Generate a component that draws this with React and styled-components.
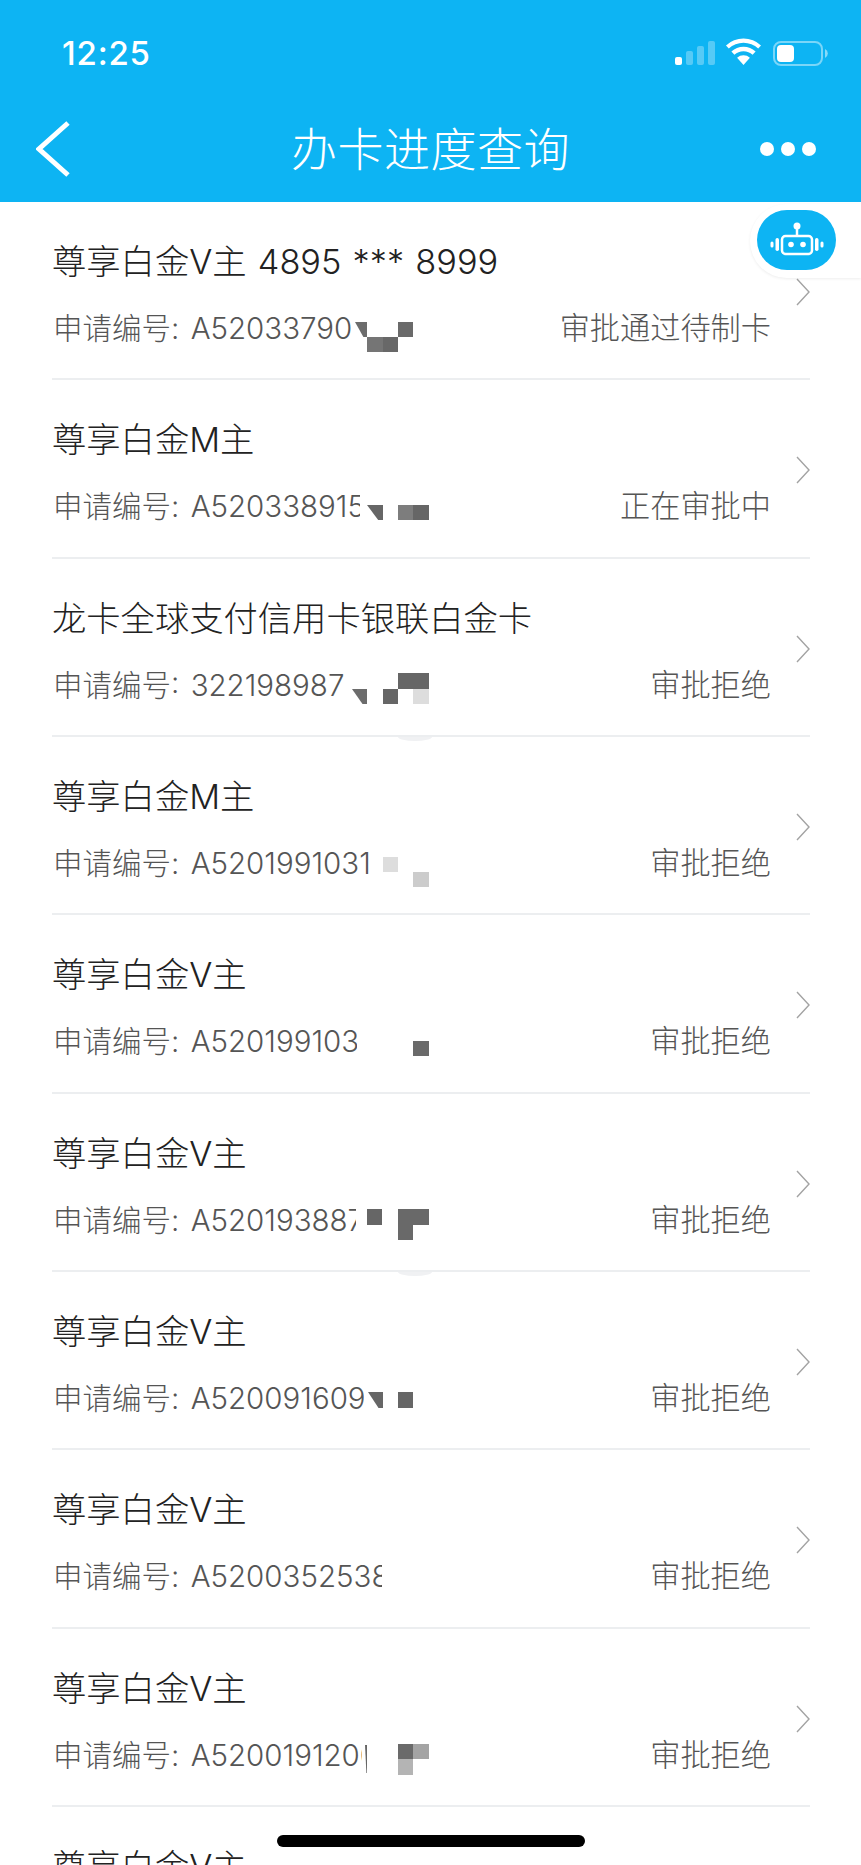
import styled, { createGlobalStyle } from "styled-components";

const GlobalStyle = createGlobalStyle`
  html, body {
    margin: 0;
    background: #fff;
  }
  body {
    font-family: Inter, "Noto Sans CJK SC", sans-serif;
  }
`;

const Page = styled.div`
  position: relative;
  width: 861px;
  height: 1865px;
  overflow: hidden;
  background: #fff;
`;

const Header = styled.header`
  height: 202px;
  background: #0db4f3;
  color: #fff;
`;

const StatusBar = styled.div`
  height: 106px;
  display: flex;
  align-items: center;
  justify-content: space-between;
  padding: 0 33px 0 62px;
  box-sizing: border-box;
`;

const Time = styled.span`
  font-size: 33px;
  font-weight: 500;
  letter-spacing: 0.8px;
  line-height: 1;
`;

const NavBar = styled.div`
  height: 96px;
  display: grid;
  grid-template-columns: 1fr auto 1fr;
  align-items: center;
  padding: 0 45px 10px 36px;
  box-sizing: border-box;
`;

const NavTitle = styled.h1`
  margin: 0;
  padding-left: 9px;
  font-size: 46px;
  font-weight: 300;
  letter-spacing: 0.5px;
  line-height: 1;
`;

const NavEnd = styled.div`
  display: flex;
  justify-content: flex-end;
`;

const Row = styled.div`
  position: relative;
  height: 178.33px;
  margin: 0 51px 0 52px;
  box-sizing: border-box;
  border-bottom: 2px solid #eceef0;
  display: flex;
  align-items: center;

  ${(p) =>
    p.$notch &&
    `&::after {
      content: "";
      position: absolute;
      left: 346px;
      bottom: -6px;
      width: 34px;
      height: 4px;
      border-radius: 0 0 50% 50% / 0 0 100% 100%;
      background: #f0f1f3;
    }`}
`;

const RowBody = styled.div`
  flex: 1;
  min-width: 0;
  margin-right: 25px;
  align-self: flex-start;
  padding-top: 38px;
`;

const RowTitle = styled.div`
  font-size: 34.3px;
  font-weight: 300;
  word-spacing: 1.6px;
  line-height: 44px;
  color: #222;
  white-space: nowrap;
`;

const RowMeta = styled.div`
  display: flex;
  justify-content: space-between;
  margin-top: 22px;
  font-size: 29.5px;
  font-weight: 300;
  word-spacing: 3px;
  line-height: 44px;
  color: #555;
  padding-left: 1px;
`;

const AppNumber = styled.span`
  display: block;
  overflow: hidden;
  white-space: nowrap;
  max-width: ${(p) => p.$clip || 400}px;
`;

const Status = styled.span`
  font-size: 30.2px;
`;

const Chevron = styled.svg`
  margin-top: 4px;
`;

const Mosaic = styled.svg`
  position: absolute;
  left: 248px;
  top: 0;
  pointer-events: none;
`;

const RobotTab = styled.div`
  position: absolute;
  top: 204px;
  right: 0;
  width: 111px;
  height: 74px;
  box-sizing: border-box;
  padding: 6px 0 0 7px;
  background: #fff;
  border-radius: 37px 0 0 37px;
  box-shadow: 0 1px 3px rgba(0, 0, 0, 0.07);
`;

const RobotButton = styled.div`
  width: 79px;
  height: 60px;
  border-radius: 30px;
  background: #0db4f3;
  display: flex;
  align-items: center;
  justify-content: center;
`;

const HomeBar = styled.div`
  position: absolute;
  left: 277px;
  top: 1835px;
  width: 308px;
  height: 12px;
  border-radius: 6px;
  background: #000;
`;

const rows = [
  {
    title: "尊享白金V主 4895 *** 8999",
    number: "A52033790",
    status: "审批通过待制卡",
    cells: [
      [355, 120, 12, 15, "#6c6c6c", 1],
      [367, 135, 16, 15, "#757575"],
      [383, 135, 15, 15, "#686868"],
      [398, 120, 15, 15, "#6a6a6a"],
    ],
  },
  {
    title: "尊享白金M主",
    number: "A520338915",
    clip: 307,
    status: "正在审批中",
    cells: [
      [367, 125, 16, 15, "#666", 1],
      [398, 125, 15, 15, "#7d7d7d"],
      [413, 125, 16, 15, "#666"],
    ],
  },
  {
    title: "龙卡全球支付信用卡银联白金卡",
    number: "322198987",
    status: "审批拒绝",
    notch: true,
    cells: [
      [352, 130, 15, 15, "#6c6c6c", 1],
      [383, 130, 15, 15, "#666"],
      [398, 114, 31, 16, "#666"],
      [413, 130, 16, 15, "#ddd"],
    ],
  },
  {
    title: "尊享白金M主",
    number: "A5201991031",
    clip: 317,
    status: "审批拒绝",
    cells: [
      [383, 120, 15, 15, "#ddd"],
      [413, 135, 16, 15, "#ccc"],
    ],
  },
  {
    title: "尊享白金V主",
    number: "A520199103",
    clip: 304,
    status: "审批拒绝",
    cells: [[413, 126, 16, 15, "#6a6a6a"]],
  },
  {
    title: "尊享白金V主",
    number: "A520193887",
    clip: 303,
    status: "审批拒绝",
    notch: true,
    cells: [
      [367, 115, 15, 16, "#666"],
      [398, 115, 31, 16, "#696969"],
      [398, 131, 15, 15, "#696969"],
    ],
  },
  {
    title: "尊享白金V主",
    number: "A520091609",
    clip: 311,
    status: "审批拒绝",
    cells: [
      [368, 120, 15, 16, "#666", 1],
      [398, 120, 15, 16, "#666"],
    ],
  },
  {
    title: "尊享白金V主",
    number: "A5200352538",
    clip: 329,
    status: "审批拒绝",
    cells: [],
  },
  {
    title: "尊享白金V主",
    number: "A5200191200",
    clip: 309,
    status: "审批拒绝",
    cells: [
      [365, 116, 2, 28, "#666", 1],
      [398, 115, 15, 15, "#6a6a6a"],
      [413, 115, 16, 15, "#a4a4a4"],
      [398, 130, 15, 16, "#b4b4b4"],
    ],
  },
  { title: "尊享白金V主", number: "A520019121", status: "审批拒绝", cells: [] },
];

const StatusIcons = () => (
  <svg width="155" height="30" viewBox="673 38 155 30" fill="#fff">
    <rect x="675" y="57" width="7" height="8" rx="2" />
    <g opacity="0.3">
      <rect x="686" y="51" width="7" height="14" rx="2" />
      <rect x="697" y="46" width="7" height="19" rx="2" />
      <rect x="708" y="41" width="7" height="24" rx="2" />
    </g>
    <path d="M743.5 65l-6.4-7.2a9.5 9.5 0 0 1 12.8 0z" />
    <path d="M734.4 54.8l-3-3.3a17.6 17.6 0 0 1 24.2 0l-3 3.3a13.3 13.3 0 0 0-18.2 0z" />
    <path d="M728.8 48.5l-2.8-3.1a25.6 25.6 0 0 1 35 0l-2.8 3.1a21.4 21.4 0 0 0-29.4 0z" />
    <rect x="774" y="42" width="48" height="23" rx="7" fill="none" stroke="#fff" strokeOpacity="0.45" strokeWidth="2" />
    <rect x="777" y="45" width="17" height="17" rx="4" />
    <path d="M825 49a5 5 0 0 1 0 9z" opacity="0.5" />
  </svg>
);

const BackIcon = () => (
  <svg width="34" height="56" viewBox="36 124 34 56" fill="none" stroke="#fff" strokeWidth="5">
    <path d="M68 126L39 152l29 26" />
  </svg>
);

const MoreIcon = () => (
  <svg width="56" height="14" viewBox="0 0 56 14" fill="#fff">
    <circle cx="7" cy="7" r="7" />
    <circle cx="28" cy="7" r="7" />
    <circle cx="49" cy="7" r="7" />
  </svg>
);

const ChevronIcon = () => (
  <Chevron width="14" height="28" viewBox="0 0 14 28" fill="none" stroke="#a3a3a3" strokeWidth="1.4">
    <path d="M1 1l12 13L1 27" />
  </Chevron>
);

const RobotIcon = () => (
  <svg width="58" height="38" viewBox="768 220 58 38" fill="none" stroke="#fff" strokeWidth="2.5">
    <circle cx="797" cy="225" r="3.5" fill="#fff" stroke="none" />
    <path d="M797 227v7" />
    <rect x="782" y="235" width="30" height="18" rx="3.5" />
    <g fill="#fff" stroke="none">
      <circle cx="791" cy="243.5" r="2.8" />
      <circle cx="803" cy="243.5" r="2.8" />
      <rect x="775.5" y="237" width="3.5" height="13" rx="1.7" />
      <rect x="815" y="237" width="3.5" height="13" rx="1.7" />
      <rect x="770.5" y="240.5" width="3" height="6" rx="1.5" />
      <rect x="820.5" y="240.5" width="3" height="6" rx="1.5" />
    </g>
  </svg>
);

const MosaicCells = ({ cells }) => (
  <Mosaic width="140" height="178" viewBox="300 0 140 178">
    {cells.map(([x, y, w, h, color, slanted], i) =>
      slanted ? (
        <polygon key={i} points={`${x},${y} ${x + w},${y} ${x + w},${y + h} ${x + w * 0.7},${y + h}`} fill={color} />
      ) : (
        <rect key={i} x={x} y={y} width={w} height={h} fill={color} />
      )
    )}
  </Mosaic>
);

const App = () => (
  <Page>
    <GlobalStyle />
    <Header>
      <StatusBar>
        <Time>12:25</Time>
        <StatusIcons />
      </StatusBar>
      <NavBar>
        <BackIcon />
        <NavTitle>办卡进度查询</NavTitle>
        <NavEnd>
          <MoreIcon />
        </NavEnd>
      </NavBar>
    </Header>
    {rows.map((row, i) => (
      <Row key={i} $notch={row.notch}>
        <RowBody>
          <RowTitle>{row.title}</RowTitle>
          <RowMeta>
            <AppNumber $clip={row.clip}>申请编号: {row.number}</AppNumber>
            <Status>{row.status}</Status>
          </RowMeta>
        </RowBody>
        <ChevronIcon />
        <MosaicCells cells={row.cells} />
      </Row>
    ))}
    <RobotTab>
      <RobotButton>
        <RobotIcon />
      </RobotButton>
    </RobotTab>
    <HomeBar />
  </Page>
);

export default App;
